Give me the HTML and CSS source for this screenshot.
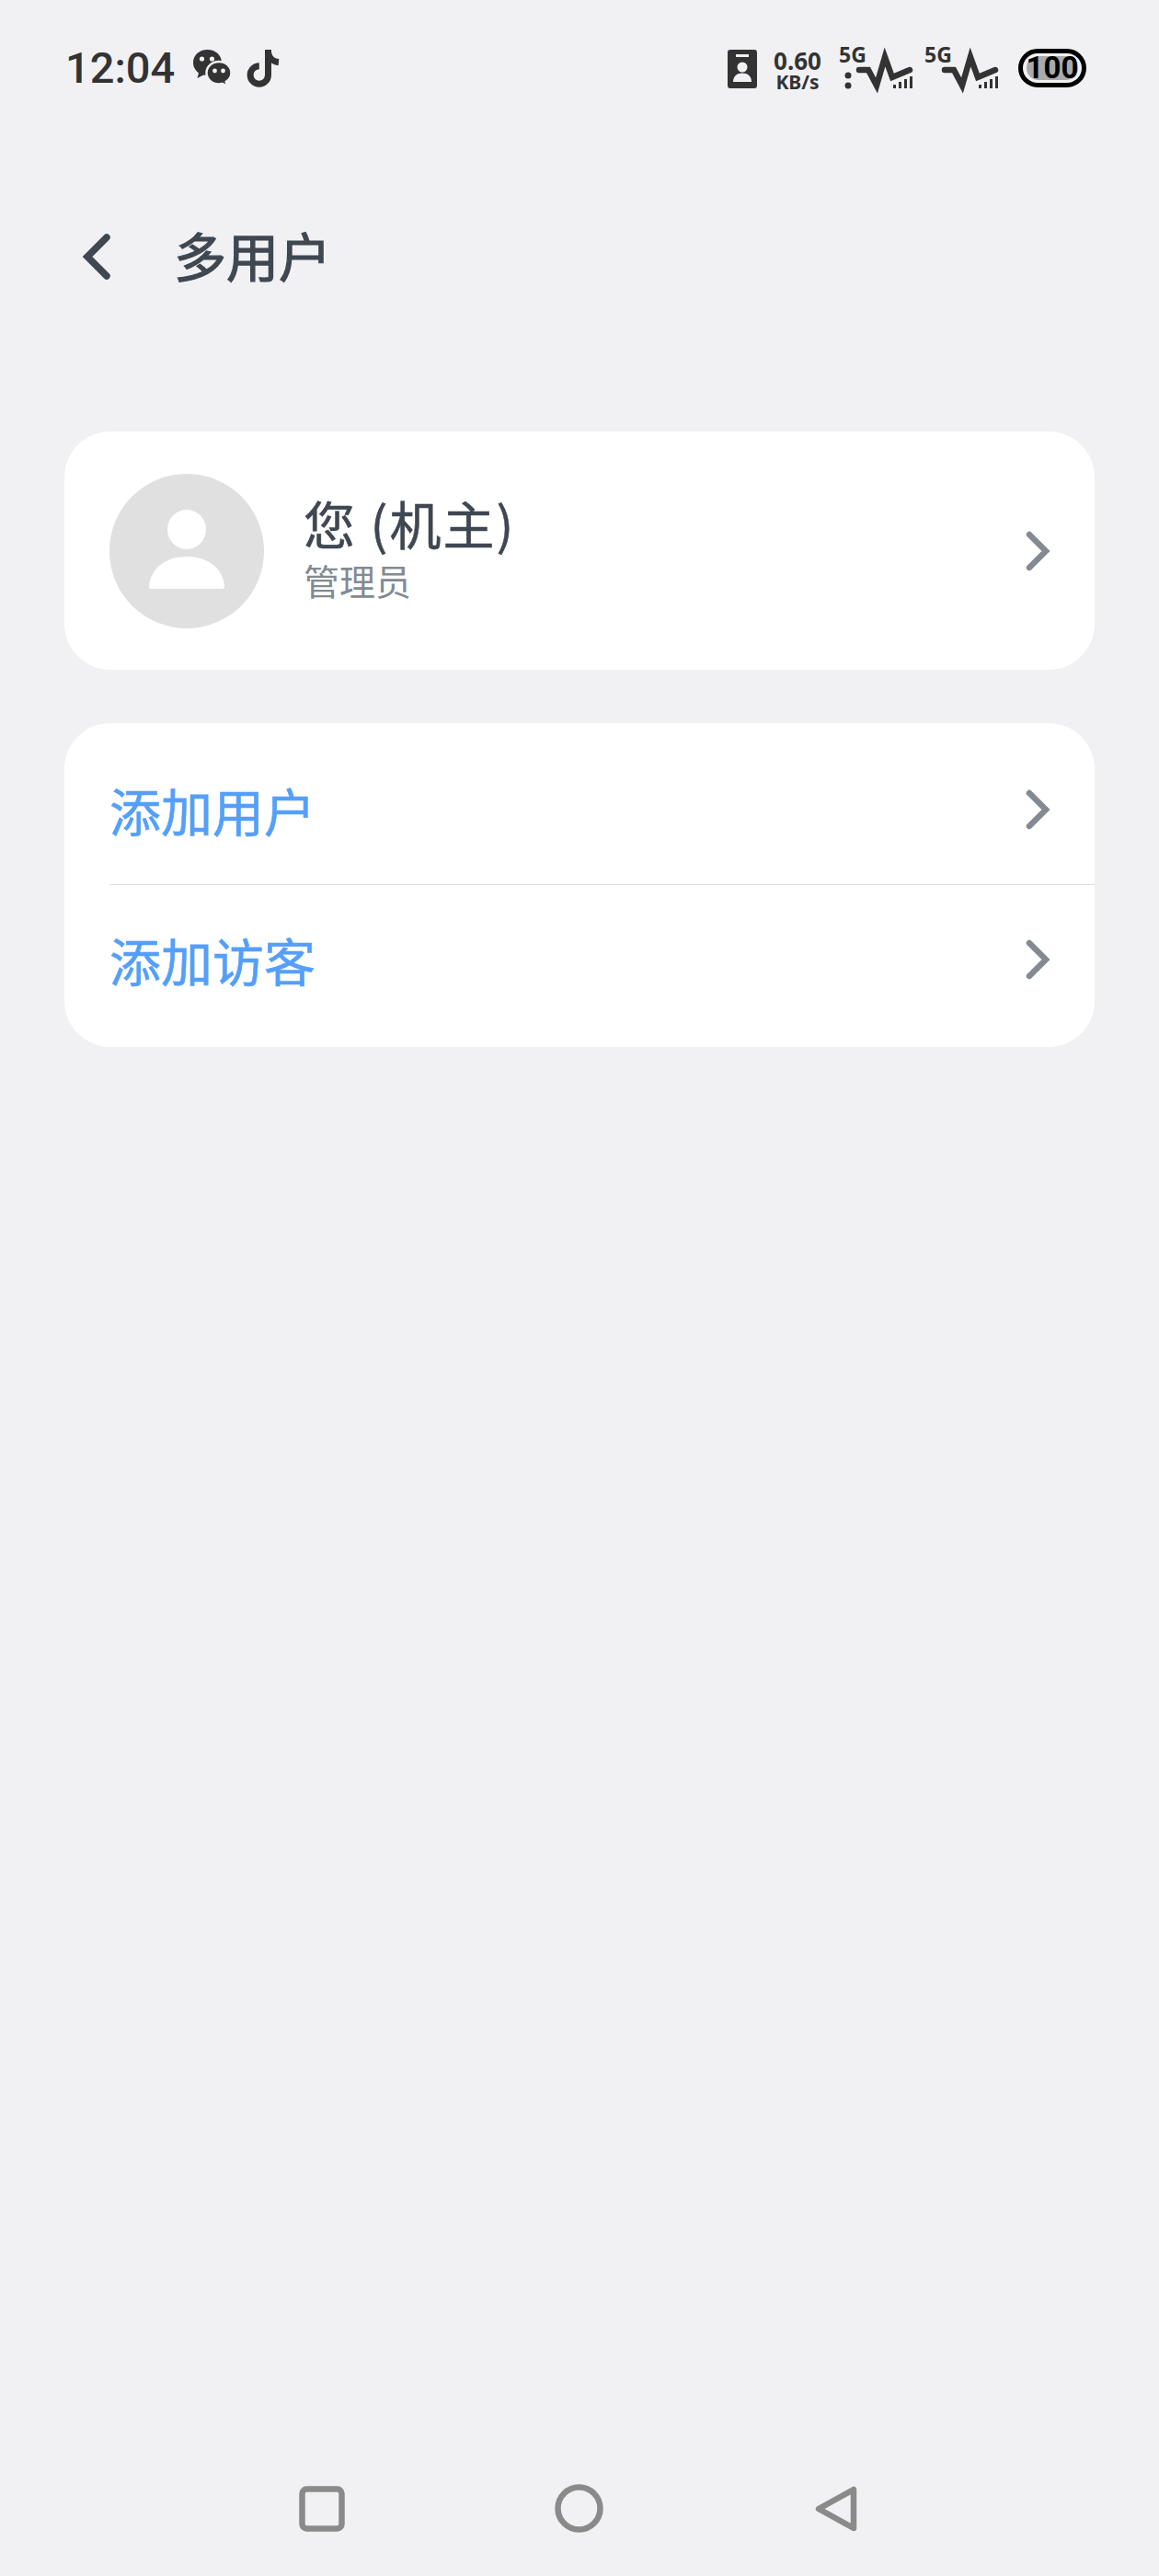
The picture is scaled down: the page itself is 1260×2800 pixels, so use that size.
FILE: index.html
```html
<!DOCTYPE html>
<html lang="zh-CN">
<head>
<meta charset="utf-8">
<title>多用户</title>
<link rel="stylesheet" href="styles.css">
</head>
<body>
<div class="page">
  <header class="status">
    <div class="status-left">
      <span class="time">12:04</span>
      <svg class="ic-wechat" width="46" height="42" viewBox="0 0 46 42">
        <path class="dark" d="M17.500 1C8.400 1 2 7.300 2 15c0 4.600 2.300 8.600 6 11.200L6.500 32l6.700-3.500c1.400.3 2.800.5 4.300.5C26.600 29 33 22.700 33 15S26.600 1 17.500 1z"/>
        <circle class="hole" cx="11.500" cy="11" r="2.600"/>
        <circle class="hole" cx="22.500" cy="11" r="2.600"/>
        <path class="dark halo" d="M30 14c-7.700 0-13.500 5.400-13.500 12.200S22.300 38.400 30 38.400c1.300 0 2.500-.2 3.700-.5l5.300 3-1.200-5c3.500-2.300 5.700-5.800 5.700-9.700C43.500 19.400 37.700 14 30 14z"/>
        <circle class="hole" cx="25.500" cy="24" r="2.400"/>
        <circle class="hole" cx="34.500" cy="24" r="2.400"/>
      </svg>
      <svg class="ic-tiktok" width="38" height="42" viewBox="0 0 38 42">
        <path class="tk" d="M23.500 1v27.500a9.700 9.700 0 1 1-9.700-9.700"/>
        <path class="tk" d="M23.500 4c1 6 5.500 10 11.500 10.500"/>
      </svg>
    </div>
    <div class="status-right">
      <svg class="ic-id" width="32" height="42" viewBox="0 0 32 42">
        <rect class="dark" width="32" height="42" rx="3"/>
        <rect class="hole" x="9" y="5" width="14" height="3"/>
        <circle class="hole" cx="16" cy="19" r="5.500"/>
        <path class="hole" d="M6 35c0-6.500 4.500-9.500 10-9.500S26 28.500 26 35z"/>
      </svg>
      <div class="speed"><span class="speed-val">0.60</span><span class="speed-unit">KB/s</span></div>
      <svg class="ic-sig ic-sig-first" width="82" height="48" viewBox="0 0 82 48">
        <text class="sig-text" x="0" y="18">5G</text>
        <circle class="dark" cx="10" cy="32" r="3.500"/>
        <circle class="dark" cx="10" cy="43" r="3.500"/>
        <polyline class="pulse" points="22,26 32,26 41,43 50,12 58,34 77,26"/>
        <rect class="dark" x="59" y="42" width="3" height="4"/>
        <rect class="dark" x="65" y="39" width="3" height="7"/>
        <rect class="dark" x="71" y="36" width="3" height="10"/>
        <rect class="dark" x="77" y="33" width="3" height="13"/>
      </svg>
      <svg class="ic-sig ic-sig-second" width="82" height="48" viewBox="0 0 82 48">
        <text class="sig-text" x="0" y="18">5G</text>
        <polyline class="pulse" points="22,26 32,26 41,43 50,12 58,34 77,26"/>
        <rect class="dark" x="59" y="42" width="3" height="4"/>
        <rect class="dark" x="65" y="39" width="3" height="7"/>
        <rect class="dark" x="71" y="36" width="3" height="10"/>
        <rect class="dark" x="77" y="33" width="3" height="13"/>
      </svg>
      <div class="battery"><span class="battery-fill"></span><span class="battery-num">100</span></div>
    </div>
  </header>

  <nav class="titlebar">
    <svg class="back" width="36" height="56" viewBox="0 0 36 56">
      <polyline points="31,7 10,28 31,49"/>
    </svg>
    <h1 class="title">多用户</h1>
  </nav>

  <main class="content">
    <section class="card card-owner">
      <div class="avatar">
        <svg width="84" height="86" viewBox="0 0 84 86">
          <ellipse class="hole" cx="42" cy="21.500" rx="21" ry="21.500"/>
          <path class="hole" d="M1 84c1-20 18-33 41-33s40 13 41 33c0 1-1 2-2 2H3c-1 0-2-1-2-2z"/>
        </svg>
      </div>
      <div class="owner-text">
        <div class="owner-name">您 (机主)</div>
        <div class="owner-role">管理员</div>
      </div>
      <svg class="chev" width="28" height="44" viewBox="0 0 28 44"><polyline points="4,4 22,22 4,40"/></svg>
    </section>

    <section class="card card-list">
      <div class="row">
        <span class="row-label">添加用户</span>
        <svg class="chev" width="28" height="44" viewBox="0 0 28 44"><polyline points="4,4 22,22 4,40"/></svg>
      </div>
      <div class="row row-divided">
        <span class="row-label">添加访客</span>
        <svg class="chev" width="28" height="44" viewBox="0 0 28 44"><polyline points="4,4 22,22 4,40"/></svg>
      </div>
    </section>
  </main>

  <footer class="navbar">
    <svg width="50" height="50" viewBox="0 0 50 50"><rect class="nav-ic" x="3.500" y="3.500" width="43" height="43" rx="5"/></svg>
    <svg width="53" height="53" viewBox="0 0 53 53"><circle class="nav-ic" cx="26.500" cy="26.500" r="23"/></svg>
    <svg width="46" height="50" viewBox="0 0 46 50"><path class="nav-ic" d="M4 25 42 4v42z"/></svg>
  </footer>
</div>
</body>
</html>
```

FILE: styles.css
```css
* { box-sizing: border-box; }
html, body { margin: 0; padding: 0; }
body {
  background: #f1f1f4;
  font-family: "Noto Sans CJK SC", "Noto Sans", sans-serif;
}
.page {
  width: 1260px;
  height: 2800px;
  display: flex;
  flex-direction: column;
  overflow: hidden;
}
.dark { fill: #333333; }
.hole { fill: #f1f1f4; }
.avatar .hole { fill: #ffffff; }

/* status bar */
.status {
  height: 150px;
  padding: 50px 79px 0 71px;
  display: flex;
  justify-content: space-between;
  align-items: flex-start;
}
.status-left { display: flex; align-items: center; height: 48px; }
.time {
  font-family: Roboto, sans-serif;
  font-weight: 500;
  font-size: 47px;
  line-height: 48px;
  color: #333333;
  width: 137px;
}
.ic-wechat { display: block; }
.halo { stroke: #f1f1f4; stroke-width: 2.500; }
.ic-tiktok { display: block; margin-left: 14px; }
.tk { fill: none; stroke: #333333; stroke-width: 7; }
.status-right { display: flex; align-items: flex-start; }
.ic-id { display: block; margin-top: 4px; }
.speed {
  margin-left: 17px;
  width: 54px;
  display: flex;
  flex-direction: column;
  align-items: center;
  font-family: "Noto Sans", sans-serif;
  font-weight: 700;
  color: #333333;
}
.speed-val { font-size: 26px; line-height: 26px; margin-top: 3px; }
.speed-unit { font-size: 21px; line-height: 21px; }
.ic-sig { display: block; overflow: visible; }
.ic-sig-first { margin-left: 18px; }
.ic-sig-second { margin-left: 11px; }
.sig-text {
  font-family: "Noto Sans", sans-serif;
  font-weight: 700;
  font-size: 23px;
  fill: #333333;
}
.pulse {
  fill: none;
  stroke: #333333;
  stroke-width: 6.500;
  stroke-linecap: round;
  stroke-linejoin: miter;
}
.battery {
  position: relative;
  margin-left: 20px;
  margin-top: 3px;
  width: 74px;
  height: 42px;
  border: 5px solid #000000;
  border-radius: 21px;
  background: #f1f1f4;
  display: flex;
  align-items: center;
  justify-content: center;
  overflow: hidden;
}
.battery-fill {
  position: absolute;
  left: 4px;
  right: 4px;
  top: 3px;
  bottom: 3px;
  border-radius: 14px;
  background: #aaaaaa;
}
.battery-num {
  position: relative;
  font-family: Roboto, sans-serif;
  font-weight: 700;
  font-size: 33px;
  line-height: 32px;
  color: #000000;
}

/* title bar */
.titlebar {
  height: 56px;
  margin-top: 101px;
  padding-left: 85px;
  display: flex;
  align-items: center;
}
.back { display: block; }
.back polyline {
  fill: none;
  stroke: #3f4751;
  stroke-width: 7.500;
  stroke-linecap: round;
  stroke-linejoin: miter;
}
.title {
  margin: -6px 0 0 68px;
  font-size: 57px;
  line-height: 56px;
  font-weight: 400;
  -webkit-text-stroke: 1.200px #3f4751;
  color: #3f4751;
}

/* cards */
.content {
  margin-top: 162px;
  padding: 0 70px;
  display: flex;
  flex-direction: column;
  gap: 58px;
}
.card { background: #ffffff; border-radius: 50px; }
.card-owner {
  height: 259px;
  padding: 0 0 0 49px;
  display: flex;
  align-items: center;
}
.avatar {
  width: 168px;
  height: 168px;
  border-radius: 50%;
  background: #e0e0e0;
  display: flex;
  align-items: center;
  justify-content: center;
  flex: none;
}
.avatar svg { display: block; margin-top: -4px; }
.owner-text { margin-left: 43px; flex: 1; margin-top: -6px; }
.owner-name {
  font-size: 56px;
  line-height: 60px;
  color: #3f4751;
  letter-spacing: 2px;
  -webkit-text-stroke: 0.500px #3f4751;
}
.owner-role {
  font-size: 39px;
  line-height: 46px;
  color: #838a92;
  margin-top: 9px;
}
.chev { display: block; flex: none; margin-right: 47px; }
.chev polyline {
  fill: none;
  stroke: #838a92;
  stroke-width: 6.500;
  stroke-linecap: round;
  stroke-linejoin: miter;
}
.card-list { padding: 13px 0; height: 352px; }
.row {
  height: 162px;
  margin-left: 49px;
  display: flex;
  align-items: center;
  justify-content: space-between;
}
.row-divided { border-top: 1px solid #dcdcdc; height: 163px; }
.row-label {
  font-size: 56px;
  line-height: 64px;
  color: #559ffb;
  -webkit-text-stroke: 0.600px #559ffb;
}

/* navigation bar */
.navbar {
  margin-top: auto;
  height: 100px;
  display: flex;
  align-items: flex-start;
  padding: 2px 0 0 325px;
}
.navbar svg { display: block; }
.navbar svg:nth-child(2) { margin-left: 228px; margin-top: -2px; }
.navbar svg:nth-child(3) { margin-left: 230px; }
.nav-ic {
  fill: none;
  stroke: #8a8a8a;
  stroke-width: 6.500;
  stroke-linejoin: round;
}
```
